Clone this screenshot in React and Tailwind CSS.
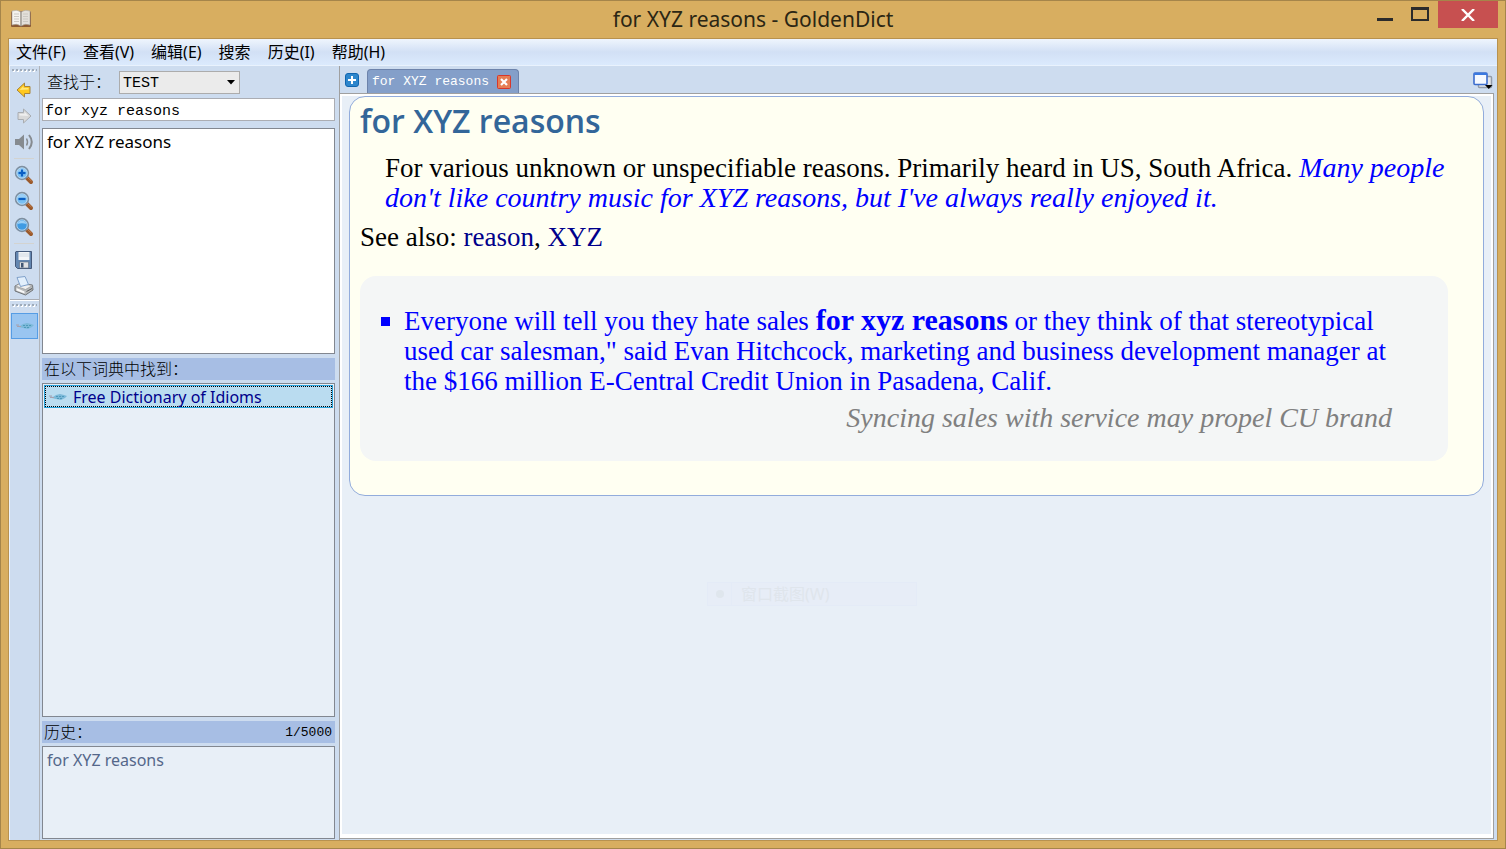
import React, { useState } from "react"

const menus = ["文件(F)", "查看(V)", "编辑(E)", "搜索", "历史(I)", "帮助(H)"]

const BookIcon = () => (
  <svg width="22" height="20" viewBox="0 0 22 20">
    <path d="M1 4Q1 2 3 2H19Q21 2 21 4V17Q21 18 20 18H2Q1 18 1 17Z" fill="#8b5a34" />
    <path d="M2 2Q7 0 11 3V17Q7 14 2 16Z" fill="#f4f2ee" stroke="#a9a49c" strokeWidth="0.6" />
    <path d="M20 2Q15 0 11 3V17Q15 14 20 16Z" fill="#e3e0da" stroke="#a9a49c" strokeWidth="0.6" />
    <path d="M4 5H9M4 7.5H9M4 10H9M4 12.5H9M13 5H18M13 7.5H18M13 10H18M13 12.5H18" stroke="#cbc8c2" />
    <path d="M11 3V17" stroke="#8f8a83" />
  </svg>
)

const BackIcon = () => (
  <svg width="16" height="16" viewBox="0 0 16 16">
    <path d="M8.5 1V4.5H14V11.5H8.5V15L1 8Z" fill="#ffc81e" stroke="#a8843a" strokeLinejoin="round" />
    <path d="M7.5 4V6H12.5V7.5L3.5 8Z" fill="#ffe67a" />
  </svg>
)

const ForwardIcon = () => (
  <svg width="16" height="16" viewBox="0 0 16 16">
    <path d="M7.5 1V4.5H2V11.5H7.5V15L15 8Z" fill="#d9d9d9" stroke="#a9adb2" strokeLinejoin="round" />
    <path d="M8.5 4V6H3.5V7.5L12.5 8Z" fill="#efefef" />
  </svg>
)

const SoundIcon = () => (
  <svg width="20" height="18" viewBox="0 0 20 18" fill="none" stroke="#868b90">
    <path d="M1 6H5L10 1.5V16.5L5 12H1Z" fill="#868b90" stroke="none" />
    <path d="M12.5 5.5Q14.5 9 12.5 12.5" strokeWidth="1.5" />
    <path d="M15 2Q20.5 9 15 16" strokeWidth="2" />
  </svg>
)

const MagnifierIcon = ({ sign }) => (
  <svg width="20" height="20" viewBox="0 0 20 20">
    <path d="M12.5 12.5L17 17" stroke="#9b5a2c" strokeWidth="4" strokeLinecap="round" />
    <path d="M13 12L17.5 16" stroke="#c98450" strokeWidth="1" />
    <circle cx="8" cy="8" r="6.4" fill={sign ? "#79c0f4" : "#3f9be3"} stroke="#7f8f9f" strokeWidth="1.6" />
    <circle cx="8" cy="8" r="5.2" fill="none" stroke="#c6dcee" strokeWidth="0.8" />
    <path d="M3.5 7Q4.5 3.5 8 3.5T12.5 7Q8 5.5 3.5 7Z" fill="#9cd0f7" />
    {sign && <path d="M4.5 8H11.5" stroke="#0b5fc4" strokeWidth="2.2" />}
    {sign === "+" && <path d="M8 4.5V11.5" stroke="#0b5fc4" strokeWidth="2.2" />}
  </svg>
)

const SaveIcon = () => (
  <svg width="20" height="20" viewBox="0 0 20 20">
    <path d="M2 1.5H17.5V18.5H3.5L1.5 16.5V2Z" fill="#6386b0" stroke="#45597a" />
    <path d="M4.5 2H15.5V10H4.5Z" fill="#f3f5f8" />
    <path d="M5 4H15M5 6H15" stroke="#d3dae3" />
    <path d="M5.5 12H14.5V18H5.5Z" fill="#dfe1e4" stroke="#5b6b80" strokeWidth="0.6" />
    <path d="M7 13H9.5V17.5H7Z" fill="#3f5573" />
  </svg>
)

const PrintIcon = () => (
  <svg width="20" height="20" viewBox="0 0 20 20" strokeLinejoin="round">
    <path d="M1 10L6 7.5L18.5 9L19 14L11.5 19L1 15Z" fill="#b8babb" stroke="#707477" />
    <path d="M1.5 10L6 7.5L18.5 9.5L11.5 13.5Z" fill="#efefef" stroke="#8c8f92" strokeWidth="0.6" />
    <path d="M3 1.5L11 0.5L14.5 8.5L6.5 10.5Z" fill="#e2effc" stroke="#7fa0ca" />
    <path d="M2.5 12L10.5 15.5V17.5L2.5 14.5Z" fill="#f9f9f9" />
    <path d="M12.5 15.5L18 12.5" stroke="#55585b" />
  </svg>
)

const DictIcon = () => (
  <svg width="20" height="10" viewBox="0 0 20 10">
    <path d="M1 4L5 5L8 3L12 2L16 3L19 4L17 6L13 8L8 7L4 6Z" fill="#7cb9d9" />
    <path d="M1 4H4M2 5.5H6" stroke="#a9a0ae" />
    <path d="M8 4.5H17M9 6.5H14" stroke="#4f9abb" strokeDasharray="2 1" />
  </svg>
)

const PlusIcon = () => (
  <svg width="14" height="14" viewBox="0 0 14 14">
    <rect x="0.5" y="0.5" width="13" height="13" rx="2.5" fill="#2d86cc" stroke="#1165ae" />
    <path d="M7 3V11M3 7H11" stroke="#fff" strokeWidth="2" />
  </svg>
)

const CloseTabIcon = () => (
  <svg width="14" height="14" viewBox="0 0 14 14">
    <rect x="0.5" y="0.5" width="13" height="13" rx="1" fill="#e57e55" stroke="#d8372a" />
    <path d="M4 4L10 10M10 4L4 10" stroke="#fff" strokeWidth="2.2" />
  </svg>
)

const WindowsIcon = () => (
  <svg width="20" height="18" viewBox="0 0 20 18">
    <rect x="5.5" y="4.5" width="13" height="11" rx="1" fill="#e4e6e9" stroke="#929ba8" strokeWidth="1.5" />
    <rect x="1" y="1" width="13" height="11.5" rx="1" fill="#f6f9ff" stroke="#3b6ccd" strokeWidth="1.6" />
    <path d="M1 2H14" stroke="#3b79e0" strokeWidth="2" />
    <path d="M12 13H19.5L15.75 17Z" fill="#000" />
  </svg>
)

const Grip = () => (
  <div className="px-[2px]">
    <svg className="block" width="100%" height="3">
      <defs>
        <pattern id="grip" width="4" height="3" patternUnits="userSpaceOnUse">
          <rect x="1" y="1" width="2" height="2" fill="#fff" />
          <rect width="2" height="2" fill="#9fabb9" />
        </pattern>
      </defs>
      <rect width="100%" height="3" fill="url(#grip)" />
    </svg>
  </div>
)

const ToolButton = ({ label, children }) => (
  <button aria-label={label} className="flex h-[26px] w-full items-center justify-center">
    {children}
  </button>
)

const Separator = () => <div className="mx-1 my-[3px] h-px bg-[#d3d3d0]" />

const Toolbar = () => (
  <div className="w-[31px] shrink-0 border-x border-r-[#b0b4ba] border-l-[#eef4fb] bg-[#cddcef]">
    <div className="flex flex-col border-b border-[#a9adb3] pt-[3px]">
      <Grip />
      <div className="flex flex-col pt-[5px] pr-px">
        <ToolButton label="后退"><BackIcon /></ToolButton>
        <ToolButton label="前进"><ForwardIcon /></ToolButton>
        <ToolButton label="发音"><SoundIcon /></ToolButton>
        <Separator />
        <ToolButton label="放大"><MagnifierIcon sign="+" /></ToolButton>
        <ToolButton label="缩小"><MagnifierIcon sign="-" /></ToolButton>
        <ToolButton label="正常大小"><MagnifierIcon /></ToolButton>
        <Separator />
        <ToolButton label="保存"><SaveIcon /></ToolButton>
        <ToolButton label="打印"><PrintIcon /></ToolButton>
      </div>
    </div>
    <div className="border-t border-white pt-[3px]">
      <Grip />
      <div className="px-px pt-[6px]">
        <button
          aria-label="Free Dictionary of Idioms"
          className="flex h-[26px] w-[27px] items-center justify-center border border-[#569de5] bg-[#99c5f1]"
        >
          <DictIcon />
        </button>
      </div>
    </div>
  </div>
)

const SearchPane = () => {
  const [word, setWord] = useState("for xyz reasons")

  return (
    <div className="flex w-[300px] shrink-0 flex-col border-r border-[#a0a0a0] pr-1 pb-px pl-0.5">
      <div className="mt-1 flex h-6 items-center">
        <label htmlFor="group" className="w-[77px] pl-[5px] text-base font-light">
          查找于：
        </label>
        <div className="relative">
          <select
            id="group"
            className="block h-[23px] w-[121px] appearance-none border border-[#acacac] bg-[#ebebeb] pt-0.5 pl-[3px] font-['Liberation_Mono',monospace] text-[15px] leading-5"
          >
            <option>TEST</option>
          </select>
          <svg className="pointer-events-none absolute top-[9px] right-[5px]" width="8" height="5">
            <path d="M0 0H8L4 4.5Z" fill="#000" />
          </svg>
        </div>
      </div>
      <input
        aria-label="查找"
        value={word}
        onChange={(e) => setWord(e.target.value)}
        className="mt-1 h-[23px] border border-[#abadb3] bg-white px-0.5 pt-[3px] font-['Liberation_Mono',monospace] text-[15px] leading-[18px] outline-none"
      />
      <ul className="mt-[7px] h-[226px] border border-[#828790] bg-white px-1 pt-px text-[17px] leading-6">
        <li>for XYZ reasons</li>
      </ul>
      <h2 className="mt-1 h-[22px] bg-[#a7bee4] px-0.5 text-base leading-[22px] font-light">
        在以下词典中找到：
      </h2>
      <ul className="mt-[3px] flex-1 border border-[#828790] bg-[#e8eff7] p-px">
        <li className="border border-[#26a0da] bg-[#badcf0]">
          <a
            href="#article"
            className="flex h-[21px] items-center gap-[5px] border border-dotted border-black pl-0.5 text-base text-[#00008b]"
          >
            <DictIcon />
            Free Dictionary of Idioms
          </a>
        </li>
      </ul>
      <h2 className="mt-1 flex h-[22px] justify-between bg-[#a7bee4] pr-[3px] pl-0.5 text-base leading-[22px] font-light">
        历史：
        <span className="pt-px font-['Liberation_Mono',monospace] text-[13px]">1/5000</span>
      </h2>
      <ul className="mt-[3px] h-[93px] border border-[#828790] bg-[#e8eff7] px-1 pt-px text-base leading-6 text-[#54678a]">
        <li>for XYZ reasons</li>
      </ul>
    </div>
  )
}

const Article = () => (
  <article
    id="article"
    className="mx-[7px] rounded-2xl border border-[#92acdc] bg-[#fffff2] px-[10px] pb-[34px] font-['Liberation_Serif',serif] text-[27px] leading-[30px]"
  >
    <h1 className="pt-1 font-['Open_Sans',sans-serif] text-[32px] leading-10 font-semibold text-[#336699]">
      for XYZ reasons
    </h1>
    <p className="mt-3 mr-5 ml-[25px]">
      For various unknown or unspecifiable reasons. Primarily heard in US, South Africa.{" "}
      <i className="text-[28px] leading-5 text-[#0000ff]">
        Many people don't like country music for XYZ reasons, but I've always really enjoyed it.
      </i>
    </p>
    <p className="mt-[9px]">
      See also:{" "}
      <a href="#reason" className="text-[#00008b]">reason</a>,{" "}
      <a href="#xyz" className="text-[#00008b]">XYZ</a>
    </p>
    <section className="mt-6 mr-[25px] rounded-2xl bg-[#f4f6f6] pt-[30px] pr-12 pb-7 pl-11">
      <ul className="list-none">
        <li className="relative text-[#0000ff]">
          <span className="absolute top-[11px] -left-[23px] size-[9px] bg-[#0000ff]" />
          Everyone will tell you they hate sales{" "}
          <b className="text-[30px] leading-5">for xyz reasons</b> or they think of that
          stereotypical used car salesman," said Evan Hitchcock, marketing and business development
          manager at the $166 million E-Central Credit Union in Pasadena, Calif.
          <cite className="mt-[7px] block pr-2 text-right text-[28px] text-[#808080]">
            Syncing sales with service may propel CU brand
          </cite>
        </li>
      </ul>
    </section>
  </article>
)

const ArticlePane = () => (
  <main className="flex min-w-0 flex-1 flex-col pr-[3px] pb-px">
    <div className="flex h-[27px] items-end pr-px pl-[5px]">
      <button aria-label="新标签页" className="mb-[6px]"><PlusIcon /></button>
      <div className="ml-2 flex h-6 items-center gap-2 rounded-t border border-b-0 border-[#6d83ab] bg-[#849fc9] px-1 pr-[7px] font-['Liberation_Mono',monospace] text-[13px] text-white">
        for XYZ reasons
        <button aria-label="关闭标签页"><CloseTabIcon /></button>
      </div>
      <button aria-label="标签页列表" className="mb-[3px] ml-auto"><WindowsIcon /></button>
    </div>
    <div className="relative flex-1 border-y border-r border-[#a0a0a0] bg-white p-0.5 pb-1">
      <div className="h-full bg-[#e8eff7]">
        <Article />
      </div>
      <div className="absolute top-[488px] left-[367px] flex h-6 w-[210px] items-center border border-[#e4ebf7] bg-[#e7edf7] text-base text-[#dfe5ec]">
        <span className="flex h-full w-6 items-center justify-center border-r border-[#e4ebf7]">
          <svg width="8" height="8">
            <circle cx="4" cy="4" r="4" fill="#dfe6ed" />
          </svg>
        </span>
        <span className="pl-[9px]">窗口截图(W)</span>
      </div>
    </div>
  </main>
)

const TitleBar = () => (
  <header className="relative flex h-[37px] items-start justify-center text-[#2b2614]">
    <span className="absolute top-2 left-[2px]"><BookIcon /></span>
    <h1 className="pt-1 text-[21px] leading-7">for XYZ reasons - GoldenDict</h1>
    <div className="absolute top-0 right-0 flex items-start">
      <button aria-label="最小化" className="flex h-[27px] w-[42px] items-start pt-[17px] pl-2">
        <span className="h-[3px] w-4 bg-[#2b2b2b]" />
      </button>
      <button aria-label="最大化" className="flex h-[27px] w-[27px] items-start pt-[6px]">
        <span className="h-[14px] w-[18px] border-2 border-t-[3px] border-[#2b2b2b]" />
      </button>
      <button aria-label="关闭" className="flex h-[27px] w-[60px] items-center justify-center bg-[#c75050]">
        <svg width="14" height="12" viewBox="0 0 14 12">
          <path d="M1 0L13 12M13 0L1 12" stroke="#fff" strokeWidth="2.4" />
        </svg>
      </button>
    </div>
  </header>
)

const App = () => {
  return (
    <div className="flex h-screen flex-col border border-[#a5854a] bg-[#d8ae60] px-[7px] pb-[7px] font-['Noto_Sans','Noto_Sans_CJK_SC',sans-serif] text-black">
      <TitleBar />
      <div className="flex min-h-0 flex-1 flex-col border border-[#b8924f] bg-[#cddcef]">
        <nav className="flex h-[27px] shrink-0 items-center gap-[17px] border-b border-[#e9f2fd] bg-linear-to-b from-[#eff5fd] via-[#d2e0f5] to-[#dbeafd] pl-[7px] text-base">
          {menus.map((name) => (
            <button key={name}>{name}</button>
          ))}
        </nav>
        <div className="flex min-h-0 flex-1">
          <Toolbar />
          <SearchPane />
          <ArticlePane />
        </div>
      </div>
    </div>
  )
}

export default App
